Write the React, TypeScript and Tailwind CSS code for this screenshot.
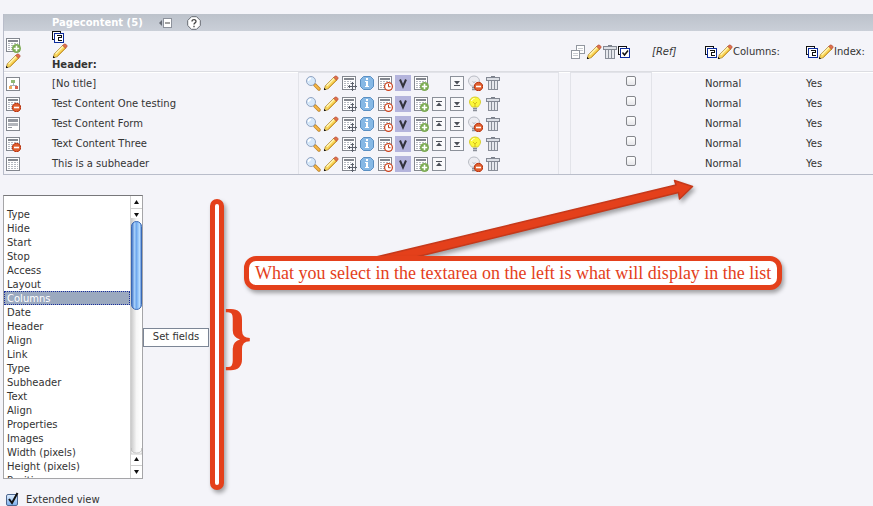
import React, { useState } from "react";

type Icon = { className?: string };

const Svg = ({ children, className = "" }: { children: React.ReactNode; className?: string }) => (
  <svg className={`h-4 w-4 shrink-0 ${className}`} viewBox="0 0 16 16" fill="none" aria-hidden="true">
    {children}
  </svg>
);

const Sheet = () => (
  <g shapeRendering="crispEdges">
    <rect x="1.5" y="1.5" width="13" height="13" fill="#fff" stroke="#83878f" />
    <path d="M3 4h10" stroke="#83878f" strokeWidth="2" />
    <path d="M3 6.5h10M3 8.5h10M3 10.5h10M3 12.5h10" stroke="#b4b8c0" strokeDasharray="2 1" />
  </g>
);

const Stop = () => (
  <g>
    <circle cx="11.5" cy="11.5" r="4.2" fill="#e0602f" stroke="#b93411" />
    <path d="M9 11.5h5" stroke="#fff" strokeWidth="1.6" />
  </g>
);

const SheetIcon = () => <Svg><Sheet /></Svg>;
const SheetHidden = () => <Svg><Sheet /><Stop /></Svg>;

const SheetNew = ({ className }: Icon) => (
  <Svg className={className}>
    <Sheet />
    <circle cx="11.5" cy="11.5" r="4.5" fill="#7cab53" />
    <path d="M11.5 8.8v5.4M8.8 11.5h5.4" stroke="#fff" strokeWidth="1.6" />
  </Svg>
);

const SheetMove = () => (
  <Svg>
    <Sheet />
    <path d="M11.5 6v10M7 11.5h9" stroke="#f4f4f9" strokeWidth="3" />
    <g shapeRendering="crispEdges" stroke="#5c616b">
      <path d="M11.5 7v9M7 11.5h9" />
      <path d="M10 8.5h3M10 14.5h3M8.5 10v3M14.5 10v3" />
    </g>
  </Svg>
);

const SheetTime = () => (
  <Svg>
    <Sheet />
    <circle cx="11.5" cy="11.5" r="3.9" fill="#fff" stroke="#c9401c" strokeWidth="1.2" />
    <path d="M11.5 9v2.7h2" stroke="#c9401c" />
  </Svg>
);

const TreeIcon = () => (
  <Svg>
    <g shapeRendering="crispEdges">
      <rect x="1.5" y="1.5" width="13" height="13" fill="#fff" stroke="#83878f" />
      <path d="M8.5 7v2M5.5 11V9.5h6V11" stroke="#a9aeb7" />
      <rect x="6" y="4" width="4" height="3" fill="#8fb873" />
      <rect x="4" y="10" width="3" height="3" fill="#eda95c" />
      <rect x="10" y="10" width="3" height="3" fill="#d9614c" />
    </g>
  </Svg>
);

const FormIcon = () => (
  <Svg>
    <g shapeRendering="crispEdges">
      <rect x="1.5" y="1.5" width="13" height="13" fill="#fff" stroke="#83878f" />
      <rect x="3" y="3" width="10" height="3" fill="#92969e" />
      <rect x="3" y="7" width="10" height="3" fill="#b3b6bc" />
      <path d="M3 11.5h4" stroke="#92969e" />
    </g>
  </Svg>
);

const Pencil = ({ className }: Icon) => (
  <Svg className={className}>
    <path d="M1.3 14.7l1-4L11 2l3 3-8.700 8.700z" fill="#f9d75c" stroke="#a98535" strokeWidth=".8" />
    <path d="M3.700 10.700L11.200 3.300" stroke="#fff3b4" strokeWidth="1.500" />
    <path d="M5.500 12.800L13.300 5" stroke="#e0a52c" strokeWidth="1" />
    <path d="M10.700 2.400l1.500-1.400h1.300l1.500 1.500v1.200l-1.500 1.600z" fill="#e0714f" stroke="#a8432a" strokeWidth=".6" />
    <path d="M1 15V12.800l2.200 2.200z" fill="#111" />
  </Svg>
);

const Magnifier = () => (
  <Svg>
    <path d="M9.8 9.8l4.2 4.2" stroke="#b9822c" strokeWidth="3.4" strokeLinecap="round" />
    <path d="M10.2 10.2l3.700 3.700" stroke="#f8b845" strokeWidth="2" strokeLinecap="round" />
    <circle cx="6" cy="6" r="4.5" fill="#d6e8fa" stroke="#93a5c2" />
    <path d="M3.5 6A2.5 2.5 0 016 3.5" stroke="#fff" strokeWidth="1.3" />
  </Svg>
);

const Info = () => (
  <Svg>
    <path d="M4.5 1.5h7l3 3v7l-3 3h-7l-3-3v-7z" fill="#86b8e5" stroke="#5a8fc2" />
    <g shapeRendering="crispEdges" fill="#fff">
      <path d="M7 3h2v2H7zM6 6h3v6H7V7H6zM6 11h4v1H6z" />
    </g>
  </Svg>
);

const Versions = () => (
  <Svg className="bg-[#b4b4dc]">
    <path d="M5 4.5L8 11.5 11 4.5" stroke="#34343c" strokeWidth="2" />
  </Svg>
);

const MoveButton = ({ up }: { up?: boolean }) => (
  <Svg>
    <g shapeRendering="crispEdges">
      <rect x="1.5" y="1.5" width="13" height="13" fill="#f9f9fb" stroke="#8c919a" />
      <path d={up ? "M5 5.5h6" : "M5 10.5h6"} stroke="#4c5058" />
    </g>
    <path d={up ? "M8 6.5l3 3.5H5z" : "M8 9.5L5 6h6z"} fill="#4c5058" />
  </Svg>
);

const Bulb = ({ hidden }: { hidden?: boolean }) => (
  <Svg>
    <path
      d="M8 1C4.8 1 2.5 3.2 2.5 6c0 2.200 1.500 3.400 2.700 5h5.600c1.200-1.600 2.700-2.800 2.700-5C13.500 3.200 11.200 1 8 1z"
      transform={hidden ? "translate(-1 0)" : undefined}
      fill={hidden ? "#ececf1" : "#fbf83c"}
      stroke={hidden ? "#b9bcc4" : "#d8cf30"}
    />
    <path d={hidden ? "M5 12.500h4M5 14.500h4" : "M6 12.500h4M6 14.500h4"} stroke="#8a8f99" strokeWidth="1.400" />
    <path d={hidden ? "M5.500 6l1.500 2 1.500-2" : "M6 6l2 2 2-2M8 8v3"} stroke={hidden ? "#c3c5cd" : "#d5bc1c"} />
    {!hidden && <path d="M4.500 5c.5-1.500 1.500-2.300 3-2.500" stroke="#fff" />}
    {hidden && <Stop />}
  </Svg>
);

const Trash = () => (
  <Svg>
    <g shapeRendering="crispEdges">
      <path d="M6 1.500h4" stroke="#7b808a" />
      <rect x="1.500" y="2.500" width="13" height="3" fill="#dcdfe5" stroke="#838893" />
      <path d="M3 6h10v9H3z" fill="#e6e8ed" />
      <path d="M3.500 6v9M6.500 6v9M9.500 6v9M12.500 6v9M3 14.500h10" stroke="#8a8f99" />
    </g>
  </Svg>
);

const Copy = () => (
  <Svg>
    <g shapeRendering="crispEdges">
      <rect x="6.500" y="1.500" width="8" height="8" fill="#fff" stroke="#9297a0" />
      <path d="M8 4.500h5M8 6.500h5" stroke="#c9ccd2" />
      <rect x="1.500" y="6.500" width="8" height="8" fill="#fff" stroke="#9297a0" />
      <path d="M3 9.500h5M3 11.500h5" stroke="#c9ccd2" />
    </g>
  </Svg>
);

const Clip = ({ check }: { check?: boolean }) => (
  <svg className="h-3 w-3 shrink-0" viewBox="0 0 12 12" fill="none" aria-hidden="true">
    <g shapeRendering="crispEdges">
      <rect x=".5" y=".5" width="8" height="8" fill="#fff" stroke="#111" />
      <rect x="2.500" y="2.500" width="9" height="9" fill="#fff" stroke="#0a2a9c" />
      {!check && <path d="M5 4.500h4v2h-3v3h3.500" stroke="#111" />}
    </g>
    {check && <path d="M4.500 6.500l2 2.500 3.500-4.500" stroke="#111" strokeWidth="1.500" />}
  </svg>
);

const rows = [
  { title: "[No title]", icon: <TreeIcon />, up: false, down: true, hidden: true },
  { title: "Test Content One testing", icon: <SheetHidden />, up: true, down: true, hidden: false },
  { title: "Test Content Form", icon: <FormIcon />, up: true, down: true, hidden: true },
  { title: "Text Content Three", icon: <SheetHidden />, up: true, down: true, hidden: false },
  { title: "This is a subheader", icon: <SheetIcon />, up: true, down: false, hidden: true },
];

const fields = [
  "", "Type", "Hide", "Start", "Stop", "Access", "Layout", "Columns", "Date", "Header", "Align", "Link",
  "Type", "Subheader", "Text", "Align", "Properties", "Images", "Width (pixels)", "Height (pixels)", "Position",
];

const IconButton = ({ label, children }: { label: string; children: React.ReactNode }) => (
  <button type="button" aria-label={label} className="block h-4 w-4 cursor-pointer">{children}</button>
);

function RowControls({ up, down, hidden }: { up: boolean; down: boolean; hidden: boolean }) {
  return (
    <div className="flex items-center gap-0.5 pb-px pl-1.5">
      <IconButton label="View"><Magnifier /></IconButton>
      <IconButton label="Edit"><Pencil /></IconButton>
      <IconButton label="Move"><SheetMove /></IconButton>
      <IconButton label="Info"><Info /></IconButton>
      <IconButton label="History"><SheetTime /></IconButton>
      <IconButton label="Versions"><Versions /></IconButton>
      <IconButton label="New"><SheetNew /></IconButton>
      {up ? <IconButton label="Move up"><MoveButton up /></IconButton> : <span className="w-4" />}
      {down ? <IconButton label="Move down"><MoveButton /></IconButton> : <span className="w-4" />}
      <IconButton label={hidden ? "Unhide" : "Hide"}><Bulb hidden={hidden} /></IconButton>
      <IconButton label="Delete"><Trash /></IconButton>
    </div>
  );
}

function ContentTable() {
  return (
    <section className="ml-[3px] border-b border-l border-[#b9bdca]">
      <header className="flex h-[17px] items-center bg-linear-to-b from-[#bcc2cb] to-[#cacfd8] pl-12">
        <h1 className="font-bold text-white">Pagecontent (5)</h1>
        <button type="button" aria-label="Collapse" className="ml-4">
          <svg className="h-3.5 w-3.5" viewBox="0 0 14 14" fill="none">
            <path d="M0 7l3-3v6z" fill="#666b75" />
            <rect x="4.500" y="2.500" width="8" height="9" fill="#fff" stroke="#8d929c" />
            <path d="M6 7h5" stroke="#444" />
          </svg>
        </button>
        <button type="button" aria-label="Help" className="ml-3.5">
          <svg className="h-3.5 w-3.5" viewBox="0 0 14 14" fill="none">
            <path d="M4.500 .700h5l3.800 3.800v5l-3.800 3.800h-5L.700 9.500v-5z" fill="#fff" stroke="#666a72" />
            <path d="M5 5.500c0-2.500 4-2.500 4 0C9 7 7 6.800 7 8.500M7 9.700v1.500" stroke="#444" strokeWidth="1.300" />
          </svg>
        </button>
      </header>
      <table className="w-full table-fixed border-separate border-spacing-0 text-left">
        <colgroup>
          <col className="w-12" />
          <col className="w-[246px]" />
          <col className="w-[261px]" />
          <col className="w-[11px]" />
          <col className="w-[82px]" />
          <col className="w-[53px]" />
          <col className="w-[101px]" />
          <col />
        </colgroup>
        <thead>
          <tr className="h-10 [&>th]:border-b [&>th]:border-[#dcdde2] [&>th]:font-normal">
            <th className="pt-1 pl-px">
              <IconButton label="New record"><SheetNew /></IconButton>
              <IconButton label="Edit records"><Pencil /></IconButton>
            </th>
            <th className="align-top">
              <Clip />
              <Pencil />
              <span className="block leading-3 font-bold">Header:</span>
            </th>
            <th />
            <th />
            <th>
              <div className="flex items-center pt-0.5">
                <Copy />
                <Pencil />
                <Trash />
                <Clip check />
              </div>
            </th>
            <th className="pt-0.5 italic">[Ref]</th>
            <th>
              <div className="flex items-center pt-0.5"><Clip /><Pencil />Columns:</div>
            </th>
            <th>
              <div className="flex items-center pt-0.5"><Clip /><Pencil />Index:</div>
            </th>
          </tr>
        </thead>
        <tbody>
          {rows.map((row) => (
            <tr
              key={row.title}
              className="h-5 first:h-[22px] [&:first-child>td]:border-t [&:first-child>td]:border-t-white"
            >
              <td className="pl-px">{row.icon}</td>
              <td>{row.title}</td>
              <td className="border-x border-[#e2e3e9] in-[tr:first-child]:border-t-[#e2e3e9]!"><RowControls {...row} /></td>
              <td />
              <td className="border-x border-[#e2e3e9] in-[tr:first-child]:border-t-[#e2e3e9]!">
                <input
                  type="checkbox"
                  aria-label={`Select ${row.title}`}
                  className="mb-1.5 ml-[55px] block h-2.5 w-2.5 appearance-none rounded-xs border border-[#85878c] bg-linear-to-b from-white to-[#e6e6ea] checked:bg-blue-400"
                />
              </td>
              <td />
              <td>Normal</td>
              <td>Yes</td>
            </tr>
          ))}
        </tbody>
      </table>
    </section>
  );
}

// Aqua style scrollbar next to the field list
const ScrollBar = () => (
  <svg className="h-full w-[11px] shrink-0" viewBox="0 0 11 282" aria-hidden="true">
    <defs>
      <linearGradient id="track">
        <stop offset="0" stopColor="#c9c9c9" />
        <stop offset=".5" stopColor="#f6f6f6" />
        <stop offset="1" stopColor="#fff" />
      </linearGradient>
      <linearGradient id="thumb">
        <stop offset="0" stopColor="#3769bd" />
        <stop offset=".3" stopColor="#a4cdf8" />
        <stop offset=".5" stopColor="#6fa9ee" />
        <stop offset=".8" stopColor="#b5dcff" />
        <stop offset="1" stopColor="#4d7fcd" />
      </linearGradient>
    </defs>
    <rect width="11" height="282" fill="#fff" />
    <rect y="22" width="11" height="235" fill="url(#track)" />
    <path d="M0 252q0 5 5.500 5t5.500-5v6H0z" fill="#fff" stroke="#b5b5b5" strokeWidth=".7" />
    <path d="M0 12.500h11M0 269.500h11" stroke="#d0d0d0" />
    <rect x=".5" y="25.500" width="10" height="88" rx="5" fill="url(#thumb)" stroke="#3968b4" />
    <path d="M5.500 4L8 8H3zM5.500 21L3 17h5zM5.500 261L8 265H3zM5.500 278L3 274h5z" fill="#111" />
  </svg>
);

function FieldSelector() {
  const [selected, setSelected] = useState(["7"]);

  return (
    <div className="ml-[3px] flex items-center">
      <div className="flex h-[284px] w-[140px] border border-[#a5a5a8] border-t-[#77777a] bg-white">
        <select
          multiple
          aria-label="Fields"
          value={selected}
          onChange={(e) => setSelected(Array.from(e.target.selectedOptions, (o) => o.value))}
          className="h-full min-w-0 flex-1 overflow-hidden border-r border-[#d0d0d0] bg-white outline-none"
        >
          {fields.map((field, i) => (
            <option
              key={i}
              value={String(i)}
              className="h-3.5 min-h-0 px-[3px] pt-0.5 pb-0 first:h-[11px] checked:-outline-offset-1 checked:outline-1 checked:outline-dotted checked:outline-[#1a2f9c] checked:bg-linear-to-b checked:from-[#9ba9bf] checked:to-[#9ba9bf] checked:[-webkit-text-fill-color:white]"
            >
              {field}
            </option>
          ))}
        </select>
        <ScrollBar />
      </div>
      <button type="button" className="h-[19px] w-[66px] border border-[#7c8696] bg-white leading-4">
        Set fields
      </button>
    </div>
  );
}

// Red notes laid over the page
function Annotations() {
  return (
    <div className="pointer-events-none absolute inset-0 overflow-hidden text-[#e4401b]">
      <svg className="absolute top-[170px] left-[360px] h-[100px] w-[350px] drop-shadow-[2px_3px_2px_rgba(0,0,0,0.35)]" viewBox="360 170 350 100">
        <path
          d="M374 257.500L676 185 674.500 180.500 692.500 186.500 679.500 199 678.500 192.500 414 257.500z"
          fill="#e4401b"
          stroke="#c5391b"
          strokeWidth="1.500"
          strokeLinejoin="round"
        />
      </svg>
      <div className="absolute top-[199px] left-[210px] h-[291px] w-3.5 rounded-full border-[5px] border-[#e4401b] bg-white shadow-[2px_3px_4px_rgba(0,0,0,0.35)]" />
      <div className="absolute top-[299px] left-[223px] font-['Liberation_Serif',serif] text-[74px] leading-[74px] font-bold">
        {"}"}
      </div>
      <p className="absolute top-[256px] left-[244px] rounded-xl border-[5px] border-[#e4401b] bg-white px-1.5 font-['Liberation_Serif',serif] text-[18px] leading-6 whitespace-nowrap shadow-[2px_3px_4px_rgba(0,0,0,0.35)]">
        What you select in the textarea on the left is what will display in the list
      </p>
    </div>
  );
}

export default function App() {
  const [extended, setExtended] = useState(true);

  return (
    <main className="relative min-h-screen bg-[#f4f4f9] pt-3.5 font-['DejaVu_Sans',Verdana,sans-serif] text-[10px] leading-4 text-[#333]">
      <ContentTable />
      <div className="pt-5">
        <FieldSelector />
      </div>
      <label className="mt-3 ml-1.5 flex h-[15px] items-end gap-2 leading-3">
        <span className="relative block h-3 w-3">
          <input
            type="checkbox"
            checked={extended}
            onChange={(e) => setExtended(e.target.checked)}
            className="peer block h-3 w-3 appearance-none rounded-xs border border-[#4d6791] bg-linear-to-b from-[#dcebfc] to-[#7fb2ee]"
          />
          <svg className="absolute -top-0.5 left-0 hidden h-3.5 w-3.5 peer-checked:block" viewBox="0 0 14 14" fill="none">
            <path d="M3 7l3 4L11.500 1" stroke="#111" strokeWidth="2" />
          </svg>
        </span>
        Extended view
      </label>
      <Annotations />
    </main>
  );
}
